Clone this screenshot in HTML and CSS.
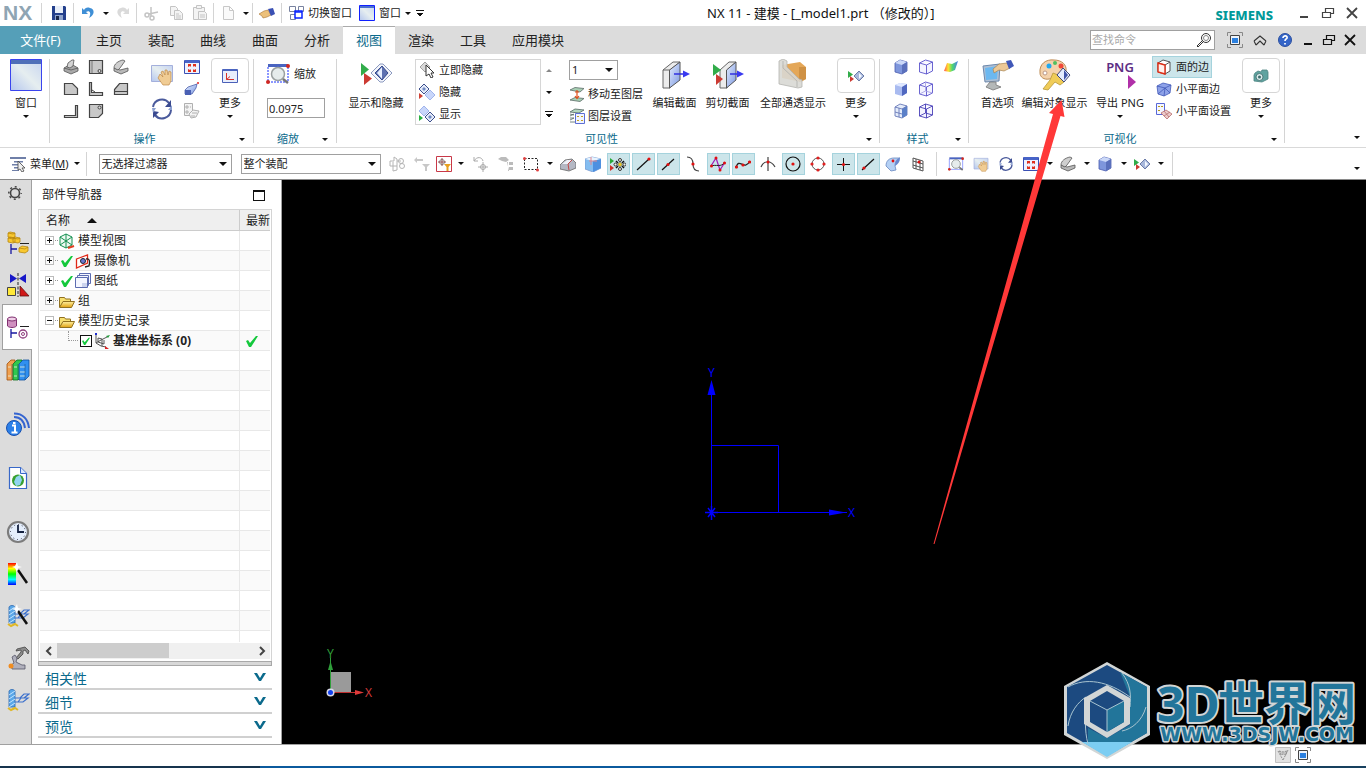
FILE: index.html
```html
<!DOCTYPE html>
<html lang="zh-CN">
<head>
<meta charset="utf-8">
<title>NX 11 - 建模</title>
<link rel="stylesheet" href="styles.css">
</head>
<body>
<svg class="sprite" aria-hidden="true">
  <defs>
    <linearGradient id="gBlue" x1="0" y1="0" x2="1" y2="1"><stop offset="0" stop-color="#e4edff"/><stop offset="1" stop-color="#7c98e0"/></linearGradient>
    <linearGradient id="gWin" x1="0" y1="1" x2="1" y2="0"><stop offset="0" stop-color="#b4c6ee"/><stop offset=".5" stop-color="#e6eef0"/><stop offset="1" stop-color="#c6d4f0"/></linearGradient>
    <linearGradient id="gFold" x1="0" y1="0" x2="0" y2="1"><stop offset="0" stop-color="#fff0a0"/><stop offset="1" stop-color="#e0a010"/></linearGradient>
    <linearGradient id="gRain" x1="0" y1="0" x2="0" y2="1"><stop offset="0" stop-color="#f00"/><stop offset=".25" stop-color="#ff0"/><stop offset=".5" stop-color="#0f0"/><stop offset=".75" stop-color="#0ff"/><stop offset="1" stop-color="#00f"/></linearGradient>
    <linearGradient id="gRainH" x1="0" y1="0" x2="1" y2="0"><stop offset="0" stop-color="#f55"/><stop offset=".3" stop-color="#ffe22e"/><stop offset=".6" stop-color="#4cd870"/><stop offset="1" stop-color="#4a78f0"/></linearGradient>
  </defs>
  <symbol id="save" viewBox="0 0 16 16"><path d="M1 1h13l1 1v13H1z" fill="#24408c"/><path d="M4 1h8v7H4z" fill="#e8eef8"/><path d="M4 10h8v5H4z" fill="#8fa4cc"/><path d="M5 11h3v4H5z" fill="#18264a"/></symbol>
  <symbol id="undo" viewBox="0 0 16 16"><path d="M2 3v6h6L6 7c3-2 6 0 3 6 6-3 6-9 1-10C7 2 5 3 4 5z" fill="#3f8fd6"/></symbol>
  <symbol id="redo" viewBox="0 0 16 16"><path d="M14 3v6H8l2-2C7 5 4 7 7 13 1 10 1 4 6 3c3-1 5 0 6 2z" fill="#dadada"/></symbol>
  <symbol id="cut" viewBox="0 0 16 16"><g fill="none" stroke="#c4c4c4" stroke-width="1.5"><circle cx="4" cy="10" r="2"/><circle cx="9" cy="13" r="2"/><path d="M6 9l9-2M8 11V2"/></g></symbol>
  <symbol id="copy" viewBox="0 0 16 16"><g fill="#f4f4f4" stroke="#c4c4c4"><path d="M2.500 1.500h5l2 2v7h-7z"/><path d="M6.500 5.500h5l3 3v6h-8z"/><path d="M8 9h3M8 11h5M8 13h5"/></g></symbol>
  <symbol id="paste" viewBox="0 0 16 16"><g fill="#f4f4f4" stroke="#c4c4c4"><path d="M1.500 2.500h11v12h-11z"/><path d="M4.500.5h5v3h-5z"/><path d="M6.500 6.500h6l2 2v6h-8zM8 10h5M8 12h5"/></g></symbol>
  <symbol id="page" viewBox="0 0 16 16"><path d="M3.500 1.500h6l4 4v9h-10zM9.500 1.500v4h4" fill="#fafafa" stroke="#c8c8c8"/></symbol>
  <symbol id="hand" viewBox="0 0 16 16"><path d="M0 9l5-3 4-1 3 5-4 2-4 1-1-2z" fill="#ecc07a" stroke="#a87432" stroke-width=".6"/><path d="M9 4l5-1 2 6-4 2z" fill="#3a50b4"/></symbol>
  <symbol id="switchw" viewBox="0 0 16 16"><g fill="#fff" stroke="#7882a0"><path d="M.5 1.500h6v5h-6zM9.500 1.500h5v5h-5zM1.500 9.500h5v5h-5z"/></g><path d="M6 6h7v7H6z" fill="#fff" stroke="#0a24ff" stroke-width="1.500"/><path d="M6 7h7" stroke="#0a24ff" stroke-width="1.500"/></symbol>
  <symbol id="win" viewBox="0 0 16 16"><path d="M.5.5h15v15H.5z" fill="url(#gWin)" stroke="#1020ff"/><path d="M1 1h14v2H1z" fill="#4a6fd0"/></symbol>
  <symbol id="bigwin" viewBox="0 0 32 32"><path d="M.5.5h31v31H.5z" fill="url(#gWin)" stroke="#3a44ee"/><path d="M1 1h30v4H1z" fill="#5070b8"/></symbol>
  <symbol id="solid1" viewBox="0 0 16 16"><path d="M1 9l7-4 7 4v3l-7 3-7-3z" fill="#a8a8a8" stroke="#555" stroke-width=".8"/><path d="M4 8l1-4 4-3h2l-1 6-3 2z" fill="#d4d4d4" stroke="#555" stroke-width=".8"/><path d="M1 9l7 2 7-2" fill="none" stroke="#555" stroke-width=".8"/></symbol>
  <symbol id="solid2" viewBox="0 0 16 16"><path d="M1 9l6 2 8-2v3l-7 3-7-3z" fill="#b8b8b8" stroke="#555" stroke-width=".8"/><path d="M1 9c0-4 4-7 9-8l2 1-5 7-2 2z" fill="#cfcfcf" stroke="#555" stroke-width=".8"/></symbol>
  <symbol id="top" viewBox="0 0 16 16"><path d="M1.500 1.500h13v13h-13z" fill="#c8c8c8" stroke="#444" stroke-width="1.200"/><path d="M4 2v12" stroke="#777"/><circle cx="11.500" cy="12" r="1.500" fill="#ddd" stroke="#444"/></symbol>
  <symbol id="front" viewBox="0 0 16 16"><path d="M1.500 2.500h8l5 5v6h-13z" fill="#c8c8c8" stroke="#444" stroke-width="1.200"/></symbol>
  <symbol id="ell" viewBox="0 0 16 16"><path d="M1.500 1.500h2v10h11v3h-13z" fill="#c8c8c8" stroke="#444" stroke-width="1.200"/><path d="M4 9l3 2" stroke="#444"/></symbol>
  <symbol id="left" viewBox="0 0 16 16"><path d="M6.500 2.500h8v11h-13v-5zM1 10.500h14" fill="#c8c8c8" stroke="#444" stroke-width="1.200"/></symbol>
  <symbol id="rev" viewBox="0 0 16 16"><path d="M12.500 2.500h2v12h-13v-2h11z" fill="#c8c8c8" stroke="#444" stroke-width="1.200"/></symbol>
  <symbol id="bottom" viewBox="0 0 16 16"><path d="M1.500 1.500h13v9l-4 4h-9z" fill="#c8c8c8" stroke="#444" stroke-width="1.200"/><circle cx="11.500" cy="4.500" r="1.500" fill="#ddd" stroke="#444"/></symbol>
  <symbol id="pan" viewBox="0 0 24 24"><path d="M1.500 3.500h21v16h-21z" fill="url(#gWin)" stroke="#a4b0dc"/><path d="M10 12l3 3-2-5 2-1 2 4 0-5 2 0 1 5 1-4 2 1v9l-2 4h-6l-5-7z" fill="#f0cc94" stroke="#c08a48" stroke-width=".7"/></symbol>
  <symbol id="rot" viewBox="0 0 24 24"><g fill="none" stroke="#4a5a9c" stroke-width="2"><path d="M3 10A9 9 0 0 1 19 6"/><path d="M21 13A9 9 0 0 1 5 18"/></g><path d="M21 3v7h-6zM3 21v-7l6 1z" fill="#3a4a90"/><path d="M2 11l4 0-3 5zM22 13h-4l4-5z" fill="#8ca0d0"/></symbol>
  <symbol id="fit" viewBox="0 0 16 16"><path d="M.5 1.500h15v13H.5z" fill="#eef2ff" stroke="#3a50b4"/><path d="M1 1h14v3H1z" fill="#4864c8"/><path d="M4 5h3v3l-1-1-2 1zM12 5H9v3l1-1 2 1zM4 13h3v-3l-1 1-2-1zM12 13H9v-3l1 1 2-1z" fill="#e0301c"/></symbol>
  <symbol id="persp" viewBox="0 0 16 16"><path d="M1 9l3-3 9-3-1 4-4 6H1z" fill="url(#gBlue)" stroke="#3c50a0" stroke-width=".7"/><path d="M1 9h6v5H1z" fill="#4a60b4"/><circle cx="14" cy="2" r="1" fill="#e02020"/></symbol>
  <symbol id="graylist" viewBox="0 0 16 16"><g fill="#f3f3f3" stroke="#b0b0b0"><path d="M.5.5h8v12h-8zM2 3h2v2H2zM2 8h2v2H2zM6 4h1"/><path d="M5 11l4-4 6 1-3 6-5 1z"/><path d="M8 10h5M7 13h4"/></g></symbol>
  <symbol id="csyswin" viewBox="0 0 16 16"><path d="M.5 1.500h15v13H.5z" fill="#e8eefc" stroke="#4a60b8"/><path d="M1 1h14v2H1z" fill="#4a64c0"/><path d="M4.500 5v6.500l3.500-3M4.500 11.500H12" fill="none" stroke="#d83028"/></symbol>
  <symbol id="zoom" viewBox="0 0 24 24"><path d="M2 2h20v3H2z" fill="#4a64c0"/><path d="M2 5v15h20V5" fill="none" stroke="#1830ff" stroke-dasharray="2 1"/><circle cx="12" cy="12" r="6.500" fill="#e6ecec" stroke="#9aa0a0" stroke-width="1.500"/><path d="M17 17l5 4" stroke="#777" stroke-width="2.500"/><circle cx="2" cy="20" r="2" fill="#d02820"/><circle cx="22" cy="4" r="2" fill="#d02820"/></symbol>
  <symbol id="showhide" viewBox="0 0 32 32"><path d="M1 4l8 6.500-8 6.500z" fill="#31ac4a"/><path d="M4 14l8 5.500-8 6.500z" fill="#cc3a32"/><path d="M20 5h3l9 9-9 9h-3l-9-9z" fill="#f2f4fa" stroke="#8c9ac0"/><path d="M22 7l6 7-6 7-7-7z" fill="#5c70b0" stroke="#34488c"/><path d="M22 8v12l-5-6z" fill="#e8f0ff"/></symbol>
  <symbol id="hideNow" viewBox="0 0 16 16"><path d="M6 0l5 5-5 5-5-5z" fill="#d8d8d8" stroke="#a0a0a0"/><path d="M7 3v11l3-2 2 4 2-1-2-4h3z" fill="#fff" stroke="#333"/></symbol>
  <symbol id="hide" viewBox="0 0 16 16"><path d="M5 0l5 5-5 5-5-5z" fill="#e4eaf8" stroke="#3c4e8c"/><path d="M5 3l2 2-2 2-2-2z" fill="#7089c4"/><path d="M11 6l5 5-5 5-5-5z" fill="#c8d6fa" stroke="#a0b4ec"/><path d="M0 9l4 3-4 3z" fill="#d04034"/></symbol>
  <symbol id="show" viewBox="0 0 16 16"><path d="M5 0l5 5-5 5-5-5z" fill="#c8d6fa" stroke="#a0b4ec"/><path d="M11 6l5 5-5 5-5-5z" fill="#e4eaf8" stroke="#3c4e8c"/><path d="M11 9l2 2-2 2-2-2z" fill="#7089c4"/><path d="M0 9l4 3-4 3z" fill="#28b040"/></symbol>
  <symbol id="movelayer" viewBox="0 0 16 16"><g stroke="#5c6c68" stroke-width=".8"><path d="M1 4l5-2.500 9 1L11 6zM1 14l5-2.500 9 1-4 3z" fill="#a8d0b4"/></g><path d="M8 4v8M6 10l2 2.500 2-2.500M6 6h4" stroke="#e0501c" fill="none" stroke-width="1.200"/></symbol>
  <symbol id="layerset" viewBox="0 0 16 16"><path d="M1 4l5-3 9 1-5 3zM1 8l4-2M1 12l4-2M1 6l4 1M1 10h4M1 14h5" fill="#b4d8c0" stroke="#506460" stroke-width=".8"/><path d="M6.500 5.500h9v10h-9z" fill="#f0f4ff" stroke="#5c6ed4"/><path d="M8 8h2v1H8zm0 4h2v1H8zM12 8h2v1h-2zm0 4h2v1h-2z" fill="#c0a020"/></symbol>
  <symbol id="section" viewBox="0 0 32 32"><path d="M4 11L14 3h7l-10 8v18H4z" fill="#ececec" stroke="#666"/><path d="M10.500 11L21 3v18l-10.500 8z" fill="url(#gBlue)" stroke="#555"/><path d="M4 11h7" stroke="#666"/><path d="M15 15h11" stroke="#3030e0" stroke-width="1.500"/><path d="M24 11.500l7 3.500-7 3.500z" fill="#3a3af0"/></symbol>
  <symbol id="clip" viewBox="0 0 32 32"><path d="M8 11l9-8h7l-9 8v18H8z" fill="#ececec" stroke="#666"/><path d="M14.500 11L24 3v18l-9.500 8z" fill="url(#gBlue)" stroke="#555"/><path d="M18 15h9" stroke="#3030e0" stroke-width="1.500"/><path d="M25 11.500l7 3.500-7 3.500z" fill="#3a3af0"/><path d="M1 5l8 6-8 6z" fill="#31ac4a"/><path d="M4 15l7 5-7 6z" fill="#cc3a32"/></symbol>
  <symbol id="through" viewBox="0 0 32 32"><path d="M5 6l18-3 6 5v12l-5 3-19-4z" fill="#e4a758"/><path d="M22 8l7 0v12l-7 3z" fill="#cf9144"/><path d="M2 2l4-2 4 2v6l12 12 3 1v7l-4 1-19-4z" fill="#d8d8d4" fill-opacity=".9" stroke="#b4b4b0" stroke-width=".8"/><path d="M6 2v7l14 13v6" fill="none" stroke="#b8b8b4"/></symbol>
  <symbol id="minish" viewBox="0 0 16 16"><path d="M0 3l5 3.500L0 10z" fill="#31ac4a"/><path d="M2 8l4 3-4 3z" fill="#cc3a32"/><path d="M11 3l5 5-5 5-5-5z" fill="#a8b8dc" stroke="#6c7ca8"/><path d="M11 5l3 3-3 3z" fill="#f4f8ff"/></symbol>
  <symbol id="cube" viewBox="0 0 16 16"><path d="M2 4l5-3 7 2v9l-5 3-7-2z" fill="#7e96dc" stroke="#4a5cae" stroke-width=".8"/><path d="M2 4l7 2 5-3-7-2z" fill="#cbd8f8"/><path d="M9 6v9l5-3V3z" fill="#5a70bc"/></symbol>
  <symbol id="cubes" viewBox="0 0 16 16"><path d="M2 4l5-2 7 1v9l-5 3-7-2z" fill="#a9bbf0"/><path d="M2 4l7 2 5-3-7-1z" fill="#dfe8ff"/><path d="M9 6v9l5-3V3z" fill="#5068c0"/></symbol>
  <symbol id="cubew" viewBox="0 0 16 16"><path d="M1.500 4l6-3 7 2v9l-6 3-7-2zM1.500 4l7 2 6-3M8.500 6v9" fill="#f4f4ff" stroke="#5a54cc" stroke-width=".9"/></symbol>
  <symbol id="cubeh" viewBox="0 0 16 16"><path d="M1.500 4l6-3 7 2v9l-6 3-7-2zM1.500 4l7 2 6-3M8.500 6v9" fill="#f4f4ff" stroke="#5a54cc" stroke-width=".9"/><path d="M7.500 1v9l-6 3M7.500 10l7 2" fill="none" stroke="#a8a4e4" stroke-width=".9"/></symbol>
  <symbol id="cubex" viewBox="0 0 16 16"><path d="M1.500 4l6-3 7 2v9l-6 3-7-2zM1.500 4l7 2 6-3M8.500 6v9M7.500 1v9l-6 3M7.500 10l7 2" fill="#f4f4ff" stroke="#4840b8" stroke-width=".9"/></symbol>
  <symbol id="cubep" viewBox="0 0 16 16"><path d="M2 4l5-3 7 2v9l-5 3-7-2z" fill="#e4ecfa" stroke="#6878b8" stroke-width=".9"/><path d="M9 6v9l5-3V3z" fill="#5a80c8"/><path d="M2 4l7 2 5-3M6 5v9M2 9l7 2" fill="none" stroke="#6878b8" stroke-width=".9"/></symbol>
  <symbol id="rain" viewBox="0 0 16 16"><path d="M4 4l5 1 6-3-3 9-5 2-6-1z" fill="url(#gRainH)"/></symbol>
  <symbol id="pref" viewBox="0 0 32 32"><path d="M1 7l17-2-1 17-14 1z" fill="#b0c0d4" stroke="#6c88ac"/><path d="M3 9l13-2-1 13-11 1z" fill="#6cb8f0"/><path d="M8 23h6v3l5 2-8 3-7-3z" fill="#b4b8b8" stroke="#888"/><path d="M11 10l6-5 8-1 3 5-6 3-5-1-5 3z" fill="#ecc896" stroke="#a88450" stroke-width=".7"/><path d="M24 2l5-1 3 6-5 3z" fill="#4058b8"/></symbol>
  <symbol id="palette" viewBox="0 0 32 32"><path d="M1 14C0 5 7 0 15 1c8 0 13 5 12 11-1 5-5 5-8 4-4-1-5 4-9 4-5 1-9-2-9-6z" fill="#f4d2ac" stroke="#bd8c56"/><circle cx="6" cy="14" r="2" fill="#fff" stroke="#b98"/><circle cx="10" cy="7" r="2.500" fill="#20a8f0"/><circle cx="16" cy="4" r="2" fill="#50c060"/><circle cx="22" cy="7" r="2.500" fill="#f04838"/><path d="M14 14l5 2 6 7-4 3-5-3-7 8-5-1 7-9z" fill="#f0cc58" stroke="#b89838" stroke-width=".8"/><path d="M24 9l7 7-6 7-7-7z" fill="#e4ecff" stroke="#404878"/><path d="M25 11l4 5-4 5z" fill="#4054a8"/></symbol>
  <symbol id="faceedge" viewBox="0 0 16 16"><path d="M2 4l5-3 7 2v9l-5 3-7-2z" fill="#fff" stroke="#555"/><path d="M2 4l7 2 5-3M9 6v9" fill="none" stroke="#555"/><path d="M2 4l7 2v9l-7-2z" fill="#fff0ec" stroke="#e02c14" stroke-width="1.400"/></symbol>
  <symbol id="facet" viewBox="0 0 16 16"><path d="M1 5l6-3 8 2-1 8-6 3-6-2z" fill="#8ea2e8" stroke="#4058b8" stroke-width=".8"/><path d="M1 5l8 2 6-3M9 7l-1 8M2 13l7-6 5 5" fill="none" stroke="#4058b8" stroke-width=".8"/></symbol>
  <symbol id="facetset" viewBox="0 0 16 16"><path d="M.5.5h8v11h-8z" fill="#f4f6ff" stroke="#5868d8"/><path d="M2 3h2v1H2zM2 7h2v1H2zM5 3h2v1H5z" fill="#b49818"/><path d="M5 10l5-3 6 4-5 5z" fill="#eccaca" stroke="#b87070" stroke-width=".8"/><path d="M8 8l5 6M14 9l-6 4" stroke="#b87070" stroke-width=".8"/></symbol>
  <symbol id="camera" viewBox="0 0 16 16"><path d="M2 5l3-2 3 1 1-2 5 0 1 2v7l-6 3-8-1V7z" fill="#5fa3a0" stroke="#4c8482" stroke-width=".8"/><circle cx="6.500" cy="9" r="3.500" fill="#d8eaea" stroke="#3c6868" stroke-width=".8"/><circle cx="6.500" cy="9" r="1.500" fill="#3c6c6c"/></symbol>
  <symbol id="menu" viewBox="0 0 16 16"><path d="M0 1h16v2H0zM4 5h9v1.500H4zM2 8h7v1.500H2zM4 11h5v1.500H4zM2 14h7v1H2z" fill="#6f7fa8"/><path d="M8 5v9l2-1 2 3 2-1-2-3h3z" fill="#eee" stroke="#444" stroke-width=".8"/></symbol>
  <symbol id="g1" viewBox="0 0 16 16"><g fill="none" stroke="#b4b4b4"><path d="M1 5h4V1l3 2v11l-4 1V6M1 5v5h7M8 5h4"/><circle cx="12" cy="5" r="2.500"/><circle cx="13" cy="10" r="2.500"/></g></symbol>
  <symbol id="g2" viewBox="0 0 16 16"><path d="M0 4l3-3v2h6v2H3v2zM8 8h8l-3 3v4h-2v-4z" fill="#c8c8c8"/></symbol>
  <symbol id="redfilter" viewBox="0 0 16 16"><path d="M.5.5h15v15H.5z" fill="#fff" stroke="#c83848"/><circle cx="6" cy="6" r="2.500" fill="none" stroke="#888"/><path d="M6 2v8M2 6h8" stroke="#905050"/><path d="M8 8h7l-2.500 3v4h-2v-4z" fill="#e8a020"/></symbol>
  <symbol id="g3" viewBox="0 0 16 16"><g fill="none" stroke="#aaa"><path d="M1 1v4h4M1 5c3-5 8-4 9 0"/><circle cx="10" cy="11" r="2.500"/><path d="M10 6v10M5 11h10"/></g></symbol>
  <symbol id="g4" viewBox="0 0 16 16"><path d="M0 3l3-2 5 0 3 3-3 2-4-1zM11 6h4v3h-4zM11 11h4v3h-4zM9 6h1v9h1z" fill="#bbb"/></symbol>
  <symbol id="dash" viewBox="0 0 16 16"><path d="M1.500 2.500h13v11h-13z" fill="none" stroke="#222" stroke-dasharray="2 1.500"/><circle cx="1.500" cy="2.500" r="1.500" fill="#e04040"/><circle cx="14.500" cy="14" r="1.500" fill="#e04040"/></symbol>
  <symbol id="block" viewBox="0 0 16 16"><path d="M0 9l5-5 7-1 4 4v5l-7 3-9-2z" fill="#b4b8c4" stroke="#666" stroke-width=".8"/><path d="M2 8l5-4h5l-4 4z" fill="#eef1f8"/><path d="M8 8l1 6M8 8l4-4" stroke="#c04848"/></symbol>
  <symbol id="glass" viewBox="0 0 16 16"><path d="M0 3l7-2 9 2v9l-8 4-8-3z" fill="#84bdf0" stroke="#7a9bd0" stroke-width=".8"/><path d="M0 3l8 2 8-2-9-2z" fill="#e8f4ff"/><path d="M8 5v11l8-4V3z" fill="#4d90e0"/><path d="M6 1v8M4 5h8" fill="none" stroke="#e08890"/></symbol>
  <symbol id="snap" viewBox="0 0 16 16"><path d="M0 2l4 3-4 3z" fill="#28a838"/><path d="M0 9l4 3-4 3z" fill="#d03028"/><g fill="#f2f2e8" stroke="#333"><circle cx="10" cy="4" r="1.500"/><circle cx="10" cy="13" r="1.500"/><circle cx="5.500" cy="8.500" r="1.500"/><circle cx="14.500" cy="8.500" r="1.500"/></g><path d="M6 5l2 2M14 5l-2 2M6 12l2-2M14 12l-2-2" stroke="#111" stroke-width="1.500"/><circle cx="10" cy="8.500" r="2" fill="#f0d020" stroke="#666" stroke-width=".6"/></symbol>
  <symbol id="endpt" viewBox="0 0 16 16"><path d="M2 14L14 3" stroke="#111" stroke-width="1.200"/><circle cx="14" cy="3" r="1.600" fill="#e01010"/></symbol>
  <symbol id="midpt" viewBox="0 0 16 16"><path d="M2 14L14 3" stroke="#111" stroke-width="1.200"/><circle cx="8" cy="8.500" r="1.600" fill="#e01010"/></symbol>
  <symbol id="ctrl" viewBox="0 0 16 16"><path d="M2 1c4 0 6 2 6 7s2 7 6 7" fill="none" stroke="#444" stroke-width="1.200"/><circle cx="8" cy="8" r="1.600" fill="#e01010"/></symbol>
  <symbol id="spline" viewBox="0 0 16 16"><path d="M1 10L6 2l4 12 5-8" fill="none" stroke="#a018b8" stroke-width="1.200"/><path d="M1 10c5-2 10 2 14-4" fill="none" stroke="#222"/><g fill="#e01010"><circle cx="1.500" cy="10" r="1.500"/><circle cx="6" cy="2" r="1.500"/><circle cx="10" cy="14" r="1.500"/><circle cx="14.500" cy="7" r="1.500"/></g></symbol>
  <symbol id="pole" viewBox="0 0 16 16"><path d="M1 12C4 0 9 16 15 5" fill="none" stroke="#222" stroke-width="1.200"/><g fill="#e01010"><circle cx="1.500" cy="11" r="1.600"/><circle cx="8" cy="9" r="1.600"/><circle cx="14.500" cy="6" r="1.600"/></g></symbol>
  <symbol id="inter" viewBox="0 0 16 16"><path d="M1 11C4 4 11 4 15 11M8 1v14" fill="none" stroke="#444" stroke-width="1.200"/><circle cx="8" cy="6" r="1.500" fill="#e01010"/></symbol>
  <symbol id="center" viewBox="0 0 16 16"><circle cx="8" cy="8" r="7" fill="none" stroke="#111" stroke-width="1.200"/><circle cx="8" cy="8" r="1.600" fill="#e01010"/></symbol>
  <symbol id="quad" viewBox="0 0 16 16"><circle cx="8" cy="8" r="6" fill="none" stroke="#555"/><g fill="#e02020"><circle cx="8" cy="2" r="1.600"/><circle cx="8" cy="14" r="1.600"/><circle cx="2" cy="8" r="1.600"/><circle cx="14" cy="8" r="1.600"/></g></symbol>
  <symbol id="exist" viewBox="0 0 16 16"><path d="M8.500 2v13M2 8.500h13" stroke="#111"/><circle cx="8.500" cy="8.500" r="1.600" fill="#e01010"/></symbol>
  <symbol id="oncurve" viewBox="0 0 16 16"><path d="M2 14L14 3" stroke="#111" stroke-width="1.200"/><circle cx="4" cy="12" r="1.600" fill="#e01010"/></symbol>
  <symbol id="onface" viewBox="0 0 16 16"><path d="M1 10c0-5 3-8 8-8h6c-4 1-5 5-5 8l1 4-5 1z" fill="#b4d0f4" stroke="#6888c0" stroke-width=".8"/><path d="M15 2c0 4-2 6-5 8 0-4 1-7 5-8z" fill="#6888d0"/><circle cx="8" cy="5" r="1.400" fill="#e01010"/></symbol>
  <symbol id="mesh" viewBox="0 0 16 16"><path d="M3 2l10 3v10L3 12zM3 5l10 3M3 9l10 3M6 3v10M10 4v10" fill="none" stroke="#444" stroke-width=".9"/><circle cx="9" cy="6" r="1.500" fill="#e01010"/></symbol>
  <symbol id="fulls" viewBox="0 0 16 16"><path d="M.5 4V.5H4M12 .5h3.500V4M15.500 12v3.500H12M4 15.500H.5V12" fill="none" stroke="#888"/><path d="M3.500 3.500h9v9h-9z" fill="#eef4fb" stroke="#444"/><path d="M5 6h6v5H5z" fill="#2b80e0"/></symbol>
  <symbol id="help" viewBox="0 0 16 16"><circle cx="8" cy="8" r="6.500" fill="#3465c8" stroke="#2c50a0"/><path d="M6 6c0-3 5-2.500 4 0-.3 1-2 1.200-2 3M8 11v1.500" fill="none" stroke="#fff" stroke-width="1.700"/></symbol>
  <symbol id="search" viewBox="0 0 16 16"><circle cx="10" cy="6" r="4.500" fill="none" stroke="#333"/><circle cx="10" cy="6" r="2.500" fill="none" stroke="#888"/><path d="M6.500 8.500L1 14l1 1 5.500-5.500" fill="none" stroke="#333"/></symbol>
  <symbol id="min" viewBox="0 0 16 16"><path d="M4 12h8" stroke="currentColor" stroke-width="2"/></symbol>
  <symbol id="restore" viewBox="0 0 16 16"><path d="M2.500 7.500h8v5h-8zM5.500 7V3.500h8v5H11" fill="none" stroke="currentColor" stroke-width="1.200"/></symbol>
  <symbol id="close" viewBox="0 0 16 16"><path d="M3 3l10 10M13 3L3 13" stroke="currentColor" stroke-width="1.800"/></symbol>
  <symbol id="up" viewBox="0 0 16 16"><path d="M2 9l6-5 6 5M4 13l4-4 4 4M2 9l2 4M14 9l-2 4" fill="none" stroke="#333" stroke-width="1.100"/></symbol>
  <symbol id="gear" viewBox="0 0 16 16"><circle cx="8" cy="8" r="4.500" fill="none" stroke="#444" stroke-width="1.600"/><circle cx="8" cy="8" r="6.200" fill="none" stroke="#444" stroke-width="1.500" stroke-dasharray="2 2.870" stroke-dashoffset="1"/></symbol>
  <symbol id="asmnav" viewBox="0 0 24 24"><g fill="#f8c830" stroke="#b88810" stroke-width=".8"><path d="M2 2l2-1 5 1v4l-2 1-5-1zM2 7l2-1 5 1v4l-2 1-5-1zM7 7l2-1 5 1v4l-2 1-5-1zM13 17l3-2 6 1v4l-3 2-6-1z"/><path d="M2 2l5 1 2-1M2 7l5 1 2-1M7 7l5 1 2-1M13 17l6 1 3-2" fill="none"/></g><path d="M5 13v10M5 18h6" stroke="#1818a0" stroke-width="1.300"/><path d="M14 12.500h9" stroke="#222"/></symbol>
  <symbol id="constr" viewBox="0 0 24 24"><path d="M4 1l7 4.500L4 10zM20 1l-7 4.500L20 10z" fill="#1818c8"/><path d="M12 0v24" stroke="#222" stroke-dasharray="3 1.500"/><path d="M1.500 14.500h8v8h-8z" fill="#ffe838" stroke="#444"/><path d="M14 13v10h9z" fill="#d01818" stroke="#611" stroke-width=".8"/></symbol>
  <symbol id="partnav" viewBox="0 0 24 24"><path d="M1.500 4v7c2 2 7 2 9 0V4z" fill="#d090c0" stroke="#803070"/><ellipse cx="6" cy="4" rx="4.500" ry="2" fill="#f0d0e8" stroke="#803070"/><path d="M5 14v9M5 18h6" stroke="#1818a0" stroke-width="1.300"/><path d="M14 11.500h9" stroke="#222"/><circle cx="17" cy="19" r="4" fill="#fff" stroke="#904080" stroke-width="1.300"/><circle cx="17" cy="19" r="1.500" fill="none" stroke="#904080"/></symbol>
  <symbol id="books" viewBox="0 0 24 24"><g stroke-width=".8"><path d="M1 6l4-4h4v16l-3 4H1z" fill="#f0a050" stroke="#a05010"/><path d="M7 6l4-4h5v16l-4 4H7z" fill="#30c850" stroke="#107020"/><path d="M13 6l4-4h6v16l-4 4h-6z" fill="#3090f0" stroke="#1050a0"/><path d="M2 9h3M2 18h3M8 9h3M8 18h3M14 9h5M14 14h5M14 18h5" fill="none" stroke="#e8f4e0"/><path d="M6 6v16M12 6v16M19 6v16" stroke="#135" stroke-opacity=".5"/></g></symbol>
  <symbol id="info" viewBox="0 0 24 24"><circle cx="8" cy="16" r="7.500" fill="#2c80e8" stroke="#1850b0"/><path d="M6 13.500h3V20M5.500 20.500h6M7 11h2.500" fill="none" stroke="#fff" stroke-width="2"/><path d="M8 5c6 0 10 4 11 11M8 1.500c9 0 14 6 15 14.500" fill="none" stroke="#3464d0" stroke-width="2"/></symbol>
  <symbol id="web" viewBox="0 0 24 24"><path d="M3.500 1.500h11l6 6v15h-17z" fill="#fff" stroke="#3868c8" stroke-width="1.200"/><path d="M14.500 1.500v6h6" fill="#dce8ff" stroke="#3868c8"/><circle cx="12" cy="14.500" r="6" fill="#38a030"/><path d="M10 11l4-2 2 5-2 5-4 1-2-4z" fill="#90d4f0"/></symbol>
  <symbol id="clock" viewBox="0 0 24 24"><circle cx="12" cy="12" r="10" fill="#e4eefc" stroke="#7c7c7c" stroke-width="2.200"/><circle cx="12" cy="12" r="7.500" fill="none" stroke="#334" stroke-dasharray="1 2.900"/><path d="M12 5v7h6" fill="none" stroke="#122040" stroke-width="1.800"/></symbol>
  <symbol id="rainwand" viewBox="0 0 24 24"><path d="M2 1h8v22H2z" fill="url(#gRain)"/><path d="M12 8l9 13" stroke="#111" stroke-width="2.500"/><path d="M11 0l1 4 4 1-4 1-1 4-2-4-3-1 3-1z" fill="#fff"/></symbol>
  <symbol id="drill" viewBox="0 0 24 24"><path d="M3 3c1-2 5-2 6 0v16H3z" fill="#5ca8e8" stroke="#2c68b0" stroke-width=".8"/><path d="M3 7l6-4M3 11l6-4M3 15l6-4M3 19l6-4" stroke="#c4e4ff"/><path d="M9 10h5l4-4h5l-5 4h4l-5 4H9M14 10h4M12 14l3-4" fill="none" stroke="#3c70cc" stroke-width="1.200"/><path d="M2 20l3 2 4-2 3 2" fill="none" stroke="#e0b828" stroke-width="2"/></symbol>
  <symbol id="robot" viewBox="0 0 24 24"><path d="M11 3l8-2 4 4-1 3-3-4-2 1 0 3-5 5-2-1 5-6v-2l-5 1z" fill="#8c8c8c" stroke="#444" stroke-width=".8"/><path d="M6 11l3-2 2 3-1 4 6 3 3 0v4H6l-1-4 3-2z" fill="#b0b0bc" stroke="#555568" stroke-width=".8"/><circle cx="5" cy="20" r="2.500" fill="#f08c20"/></symbol>
  <symbol id="mview" viewBox="0 0 16 16"><path d="M1 4l6-3 6 3v8l-6 3-6-3zM7 1v14M1 4l12 8M13 4L1 12" fill="#effaf3" stroke="#149050"/><path d="M9 15l6-2" stroke="#e04020" stroke-width="2"/></symbol>
  <symbol id="cam" viewBox="0 0 16 16"><path d="M1.500 6l11-4v8l-11 5z" fill="#fff" stroke="#e02818" stroke-width="1.300"/><circle cx="8" cy="8" r="2.500" fill="#6878d0" stroke="#223"/><path d="M11 6c4-1 4 3 3 7l-4 1" fill="none" stroke="#222" stroke-width="1.300"/></symbol>
  <symbol id="sheets" viewBox="0 0 16 16"><g fill="#f4f6ff" stroke="#5c6cb0"><path d="M4.500.5h11v10h-11z"/><path d="M2.500 2.500h11v10h-11z"/><path d="M.5 4.500h12v10H.5z"/></g><path d="M7 10h5v4H7z" fill="#ccd4ee"/></symbol>
  <symbol id="folder" viewBox="0 0 16 16"><path d="M.5 14V4.500h5l1 1.500h5v3" fill="#f8e070" stroke="#907020"/><path d="M.5 14.500L4 8.500h11.500l-3 6z" fill="url(#gFold)" stroke="#907020"/></symbol>
  <symbol id="csys" viewBox="0 0 16 16"><path d="M2 1v9l5-3 6-3M2 10l5 3 5 1M4 5l4 1v7M4 5v4l6 2V7" fill="none" stroke="#555"/><path d="M12 3l4-1-2 3z" fill="#209838"/><path d="M11 13l4 3-4 0z" fill="#d82020"/><path d="M1 0h2v2H1z" fill="#2030d0"/></symbol>
  <symbol id="check" viewBox="0 0 12 12"><path d="M0 6l2-1 2 3 6-7h2L5 12H3z" fill="#14c83c"/></symbol>
  <symbol id="flag" viewBox="0 0 16 16"><path d="M.5.5h15v15H.5z" fill="#e2e2e2" stroke="#c0c0c0"/><path d="M3 4l5 9M13 3L8 13M4 4l4 1 4-1-1 4-3-1-2 1z" stroke="#909090" fill="#c4c4c4" stroke-dasharray="2 1"/></symbol>
</svg>

<header class="titlebar">
  <span class="nx">NX</span>
  <div class="quick">
    <button class="q sep first" aria-label="保存"><svg class="i16"><use href="#save"/></svg></button>
    <button class="q sep" aria-label="撤消"><svg class="i16"><use href="#undo"/></svg></button>
    <button class="q slim" aria-label="撤消列表"><i class="caret"></i></button>
    <button class="q" aria-label="重做"><svg class="i16"><use href="#redo"/></svg></button>
    <button class="q sep" aria-label="剪切"><svg class="i16"><use href="#cut"/></svg></button>
    <button class="q" aria-label="复制"><svg class="i16"><use href="#copy"/></svg></button>
    <button class="q" aria-label="粘贴"><svg class="i16"><use href="#paste"/></svg></button>
    <button class="q sep" aria-label="新建"><svg class="i16"><use href="#page"/></svg></button>
    <button class="q slim" aria-label="新建列表"><i class="caret"></i></button>
    <button class="q sep" aria-label="重复命令"><svg class="i16"><use href="#hand"/></svg></button>
    <button class="q text sep"><svg class="i16"><use href="#switchw"/></svg>切换窗口</button>
    <button class="q text"><svg class="i16"><use href="#win"/></svg>窗口<i class="caret"></i></button>
    <button class="q over" aria-label="更多工具"><i class="caret bar"></i></button>
  </div>
  <h1>NX 11 - 建模 - [_model1.prt （修改的）]</h1>
  <span class="siemens">SIEMENS</span>
  <div class="winbtns light">
    <button aria-label="最小化"><svg class="i16"><use href="#min"/></svg></button>
    <button aria-label="还原"><svg class="i16"><use href="#restore"/></svg></button>
    <button aria-label="关闭"><svg class="i16"><use href="#close"/></svg></button>
  </div>
</header>

<nav class="tabs">
  <button class="tab file">文件(F)</button>
  <button class="tab">主页</button><button class="tab">装配</button><button class="tab">曲线</button><button class="tab">曲面</button><button class="tab">分析</button><button class="tab on">视图</button><button class="tab">渲染</button><button class="tab">工具</button><button class="tab">应用模块</button>
  <div class="find"><input type="text" placeholder="查找命令" aria-label="查找命令"><svg class="i16"><use href="#search"/></svg></div>
  <div class="winbtns">
    <button aria-label="全屏"><svg class="i16"><use href="#fulls"/></svg></button>
    <button aria-label="折叠功能区"><svg class="i16"><use href="#up"/></svg></button>
    <button aria-label="帮助"><svg class="i16"><use href="#help"/></svg></button>
    <button class="tight" aria-label="最小化"><svg class="i16"><use href="#min"/></svg></button>
    <button class="tight" aria-label="还原"><svg class="i16"><use href="#restore"/></svg></button>
    <button class="tight" aria-label="关闭"><svg class="i16"><use href="#close"/></svg></button>
  </div>
</nav>

<section class="ribbon">
  <div class="group g-window">
    <div class="tools"><button class="big"><svg class="i32"><use href="#bigwin"/></svg><span>窗口</span><i class="caret"></i></button></div>
  </div>
  <div class="group g-op">
    <div class="tools">
      <div class="grid3">
        <button aria-label="正三轴测图"><svg class="i16"><use href="#solid1"/></svg></button><button aria-label="俯视图"><svg class="i16"><use href="#top"/></svg></button><button aria-label="正等测图"><svg class="i16"><use href="#solid2"/></svg></button>
        <button aria-label="前视图"><svg class="i16"><use href="#front"/></svg></button><button aria-label="右视图"><svg class="i16"><use href="#ell"/></svg></button><button aria-label="左视图"><svg class="i16"><use href="#left"/></svg></button>
        <button aria-label="后视图"><svg class="i16"><use href="#rev"/></svg></button><button aria-label="仰视图"><svg class="i16"><use href="#bottom"/></svg></button>
      </div>
      <div class="stack2"><button aria-label="平移"><svg class="i24"><use href="#pan"/></svg></button><button aria-label="旋转"><svg class="i24"><use href="#rot"/></svg></button></div>
      <div class="stack3"><button aria-label="适合窗口"><svg class="i16"><use href="#fit"/></svg></button><button aria-label="透视"><svg class="i16"><use href="#persp"/></svg></button><button aria-label="视图操作"><svg class="i16"><use href="#graylist"/></svg></button></div>
      <button class="big more"><span class="frame"><svg class="i16"><use href="#csyswin"/></svg></span><span>更多</span><i class="caret"></i></button>
    </div>
    <div class="foot"><span>操作</span><i class="caret"></i></div>
  </div>
  <div class="group g-zoom">
    <div class="tools zoomcol">
      <button class="row"><svg class="i24"><use href="#zoom"/></svg>缩放</button>
      <input type="text" value="0.0975" aria-label="缩放比例">
    </div>
    <div class="foot"><span>缩放</span><i class="caret"></i></div>
  </div>
  <div class="group g-vis">
    <div class="tools">
      <button class="big w78"><svg class="i32"><use href="#showhide"/></svg><span>显示和隐藏</span></button>
      <div class="gallery">
        <button class="row"><svg class="i16"><use href="#hideNow"/></svg>立即隐藏</button>
        <button class="row"><svg class="i16"><use href="#hide"/></svg>隐藏</button>
        <button class="row"><svg class="i16"><use href="#show"/></svg>显示</button>
      </div>
      <div class="stack3 scroll"><button aria-label="上一行"><i class="caret upw"></i></button><button aria-label="下一行"><i class="caret"></i></button><button aria-label="展开"><i class="caret bar"></i></button></div>
      <div class="layers">
        <div class="combo short"><select aria-label="工作图层"><option>1</option></select><i class="caret wide"></i></div>
        <button class="row"><svg class="i16"><use href="#movelayer"/></svg>移动至图层</button>
        <button class="row"><svg class="i16"><use href="#layerset"/></svg>图层设置</button>
      </div>
      <button class="big w52"><svg class="i32"><use href="#section"/></svg><span>编辑截面</span></button>
      <button class="big w52"><svg class="i32"><use href="#clip"/></svg><span>剪切截面</span></button>
      <button class="big w78"><svg class="i32"><use href="#through"/></svg><span>全部通透显示</span></button>
      <button class="big more"><span class="frame"><svg class="i16"><use href="#minish"/></svg></span><span>更多</span><i class="caret"></i></button>
    </div>
    <div class="foot wide"><span>可见性</span><i class="caret"></i></div>
  </div>
  <div class="group g-style">
    <div class="tools">
      <div class="grid3">
        <button aria-label="带边着色"><svg class="i16"><use href="#cube"/></svg></button><button aria-label="带有隐藏边的线框"><svg class="i16"><use href="#cubew"/></svg></button><button aria-label="面分析"><svg class="i16"><use href="#rain"/></svg></button>
        <button aria-label="着色"><svg class="i16"><use href="#cubes"/></svg></button><button aria-label="带有淡化边的线框"><svg class="i16"><use href="#cubeh"/></svg></button><span></span>
        <button aria-label="局部着色"><svg class="i16"><use href="#cubep"/></svg></button><button aria-label="静态线框"><svg class="i16"><use href="#cubex"/></svg></button>
      </div>
    </div>
    <div class="foot wide"><span>样式</span><i class="caret"></i></div>
  </div>
  <div class="group g-render">
    <div class="tools">
      <button class="big w41"><svg class="i32"><use href="#pref"/></svg><span>首选项</span></button>
      <button class="big w73"><svg class="i32"><use href="#palette"/></svg><span>编辑对象显示</span></button>
      <button class="big w58"><span class="png"><b>PNG</b><svg class="play" viewBox="0 0 8 14"><path d="M0 0l8 7-8 7z" fill="#b030a8"/></svg></span><span>导出 PNG</span><i class="caret"></i></button>
      <div class="edges">
        <button class="row on"><svg class="i16"><use href="#faceedge"/></svg>面的边</button>
        <button class="row"><svg class="i16"><use href="#facet"/></svg>小平面边</button>
        <button class="row"><svg class="i16"><use href="#facetset"/></svg>小平面设置</button>
      </div>
      <button class="big more"><span class="frame"><svg class="i16"><use href="#camera"/></svg></span><span>更多</span><i class="caret"></i></button>
    </div>
    <div class="foot wide"><span>可视化</span><i class="caret"></i></div>
  </div>
  <div class="group g-rest"><div class="foot"><i class="caret"></i></div></div>
</section>

<section class="selbar">
  <button class="menu"><svg class="i16"><use href="#menu"/></svg><span>菜单(<u>M</u>)</span><i class="caret"></i></button>
  <i class="rule"></i>
  <div class="combo filter"><select aria-label="类型过滤器"><option>无选择过滤器</option></select><i class="caret wide"></i></div>
  <div class="combo scope"><select aria-label="选择范围"><option>整个装配</option></select><i class="caret wide"></i></div>
  <button class="t" aria-label="选择组件"><svg class="i16"><use href="#g1"/></svg></button>
  <button class="t" aria-label="重置过滤器"><svg class="i16"><use href="#g2"/></svg></button>
  <button class="t nar" aria-label="常规选择过滤器"><svg class="i16"><use href="#redfilter"/></svg></button>
  <button class="d far" aria-label="过滤器列表"><i class="caret"></i></button>
  <button class="t" aria-label="恢复"><svg class="i16"><use href="#g3"/></svg></button>
  <button class="t" aria-label="查找"><svg class="i16"><use href="#g4"/></svg></button>
  <button class="t" aria-label="矩形"><svg class="i16"><use href="#dash"/></svg></button>
  <button class="d" aria-label="选择方式"><i class="caret"></i></button>
  <button class="t" aria-label="实体"><svg class="i16"><use href="#block"/></svg></button>
  <button class="t" aria-label="高亮隐藏边"><svg class="i16"><use href="#glass"/></svg></button>
  <button class="t on" aria-label="启用捕捉点"><svg class="i16"><use href="#snap"/></svg></button>
  <button class="t on" aria-label="端点"><svg class="i16"><use href="#endpt"/></svg></button>
  <button class="t on" aria-label="中点"><svg class="i16"><use href="#midpt"/></svg></button>
  <button class="t" aria-label="控制点"><svg class="i16"><use href="#ctrl"/></svg></button>
  <button class="t on" aria-label="极点"><svg class="i16"><use href="#spline"/></svg></button>
  <button class="t on" aria-label="定义点"><svg class="i16"><use href="#pole"/></svg></button>
  <button class="t" aria-label="交点"><svg class="i16"><use href="#inter"/></svg></button>
  <button class="t on" aria-label="圆弧中心"><svg class="i16"><use href="#center"/></svg></button>
  <button class="t" aria-label="象限点"><svg class="i16"><use href="#quad"/></svg></button>
  <button class="t on" aria-label="现有点"><svg class="i16"><use href="#exist"/></svg></button>
  <button class="t on" aria-label="曲线上的点"><svg class="i16"><use href="#oncurve"/></svg></button>
  <button class="t" aria-label="面上的点"><svg class="i16"><use href="#onface"/></svg></button>
  <button class="t" aria-label="网格点"><svg class="i16"><use href="#mesh"/></svg></button>
  <i class="rule mid"></i>
  <button class="t" aria-label="缩放"><svg class="i16"><use href="#zoom"/></svg></button>
  <button class="t" aria-label="平移"><svg class="i16"><use href="#pan"/></svg></button>
  <button class="t" aria-label="旋转"><svg class="i16"><use href="#rot"/></svg></button>
  <button class="t" aria-label="适合窗口"><svg class="i16"><use href="#fit"/></svg></button>
  <button class="d" aria-label="适合窗口列表"><i class="caret"></i></button>
  <button class="t" aria-label="定向视图"><svg class="i16"><use href="#solid2"/></svg></button>
  <button class="d" aria-label="视图列表"><i class="caret"></i></button>
  <button class="t" aria-label="渲染样式"><svg class="i16"><use href="#cube"/></svg></button>
  <button class="d" aria-label="样式列表"><i class="caret"></i></button>
  <button class="t" aria-label="显示和隐藏"><svg class="i16"><use href="#minish"/></svg></button>
  <button class="d" aria-label="显示列表"><i class="caret"></i></button>
  <i class="rule mid"></i>
  <button class="d end" aria-label="选项"><i class="caret"></i></button>
</section>

<main>
  <nav class="rail">
    <button class="first" aria-label="设置"><svg class="i16"><use href="#gear"/></svg></button>
    <button aria-label="装配导航器"><svg class="i24"><use href="#asmnav"/></svg></button>
    <button aria-label="约束导航器"><svg class="i24"><use href="#constr"/></svg></button>
    <button class="on" aria-label="部件导航器"><svg class="i24"><use href="#partnav"/></svg></button>
    <button aria-label="重用库"><svg class="i24"><use href="#books"/></svg></button>
    <button class="gap" aria-label="HD3D 工具"><svg class="i24"><use href="#info"/></svg></button>
    <button class="gap" aria-label="Web 浏览器"><svg class="i24"><use href="#web"/></svg></button>
    <button class="gap" aria-label="历史记录"><svg class="i24"><use href="#clock"/></svg></button>
    <button aria-label="系统材料"><svg class="i24"><use href="#rainwand"/></svg></button>
    <button aria-label="加工向导"><svg class="i24" viewBox="0 0 24 24"><use href="#drill"/><path d="M12 7l9 13" stroke="#111" stroke-width="2.500"/><path d="M11 0l1 4 4 1-4 1-1 4-2-4-3-1 3-1z" fill="#fff"/></svg></button>
    <button aria-label="机床"><svg class="i24"><use href="#robot"/></svg></button>
    <button aria-label="刀具"><svg class="i24"><use href="#drill"/></svg></button>
  </nav>

  <aside class="panel">
    <div class="phead"><h2>部件导航器</h2><button aria-label="最大化面板"></button></div>
    <div class="treebox">
      <div class="treeview">
        <table>
          <thead><tr><th class="name">名称 <i class="sort"></i></th><th>最新</th></tr></thead>
          <tbody>
            <tr><td><div class="node"><button class="pm plus" aria-label="展开"></button><i class="dots"></i><svg class="i16"><use href="#mview"/></svg>模型视图</div></td><td></td></tr>
            <tr><td><div class="node"><button class="pm plus" aria-label="展开"></button><i class="dots"></i><svg class="tick"><use href="#check"/></svg><svg class="i16"><use href="#cam"/></svg>摄像机</div></td><td></td></tr>
            <tr><td><div class="node"><button class="pm plus" aria-label="展开"></button><i class="dots"></i><svg class="tick"><use href="#check"/></svg><svg class="i16"><use href="#sheets"/></svg>图纸</div></td><td></td></tr>
            <tr><td><div class="node"><button class="pm plus" aria-label="展开"></button><i class="dots"></i><svg class="i16"><use href="#folder"/></svg>组</div></td><td></td></tr>
            <tr><td><div class="node"><button class="pm" aria-label="折叠"></button><i class="dots"></i><svg class="i16"><use href="#folder"/></svg>模型历史记录</div></td><td></td></tr>
            <tr><td><div class="node leaf"><i class="elbow"></i><span class="box"><input type="checkbox" checked id="datum"><svg viewBox="0 0 12 12"><use href="#check"/></svg></span><svg class="i16"><use href="#csys"/></svg><label for="datum">基准坐标系 (0)</label></div></td><td><svg class="tick"><use href="#check"/></svg></td></tr>
          </tbody>
        </table>
        <div class="blank"></div>
      </div>
      <div class="hscroll"><button aria-label="向左"><svg viewBox="0 0 8 10"><path d="M6 1L2 5l4 4" fill="none" stroke="#444" stroke-width="2"/></svg></button><div class="track"><div class="thumb"></div></div><button aria-label="向右"><svg viewBox="0 0 8 10"><path d="M2 1l4 4-4 4" fill="none" stroke="#444" stroke-width="2"/></svg></button></div>
    </div>
    <div class="splitter"></div>
    <button class="fold">相关性<svg viewBox="0 0 12 10"><path d="M0 1h3l3 5 3-5h3L7 9H5z" fill="#0b6a8c"/></svg></button>
    <button class="fold">细节<svg viewBox="0 0 12 10"><path d="M0 1h3l3 5 3-5h3L7 9H5z" fill="#0b6a8c"/></svg></button>
    <button class="fold">预览<svg viewBox="0 0 12 10"><path d="M0 1h3l3 5 3-5h3L7 9H5z" fill="#0b6a8c"/></svg></button>
  </aside>

  <section class="canvas">
    <svg class="datum" viewBox="0 0 160 160" width="160" height="160">
      <g stroke="#00f" fill="none"><path d="M9.500 17v133M9 147.500h136M9.500 80.500h67v67"/><path d="M3 147.500h13M9.500 141v14M6 143l7 9M13 143l-7 9" stroke-width="1.500"/></g>
      <path d="M9.500 15l4 15h-8zM144 147.500l-17 3v-6z" fill="#00f"/>
      <text x="6" y="12">Y</text><text x="146" y="152">X</text>
    </svg>
    <svg class="triad" viewBox="0 -8 60 64" width="60" height="64">
      <path d="M9 22h20v21H9z" fill="#9a9a9a"/>
      <path d="M8.500 8v34" stroke="#2f9e3a"/><path d="M8.500 11l2.500 9H6z" fill="#2f9e3a"/>
      <path d="M12 42.500h26" stroke="#c03030"/><path d="M42 42.500l-9 2.500v-5z" fill="#e03a3a"/>
      <circle cx="8.500" cy="42.500" r="4" fill="#d8d8e8"/><circle cx="8.500" cy="42.500" r="2.500" fill="#1040f0"/>
      <text x="5" y="8" fill="#2f9e3a">Y</text><text x="43" y="47" fill="#d03a3a">X</text>
    </svg>
  </section>
</main>

<footer class="status">
  <svg class="i16"><use href="#flag"/></svg><button aria-label="全屏"><svg class="i16"><use href="#fulls"/></svg></button>
</footer>
<div class="taskline"></div>

<svg class="pointer" viewBox="0 0 140 452" width="140" height="452" aria-hidden="true"><path d="M3.500 450L123 20l-4-1L131.500 6l3 17-4-1L4.500 450z" fill="#ff3838"/></svg>

<svg class="mark" viewBox="0 0 300 100" width="300" height="100" aria-label="3D世界网">
  <path d="M43 2l43 24v49L43 99 0 75V26z" fill="#d2d6d6"/>
  <path d="M43 5l40 22v46L43 96 3 73V27z" fill="#1c4a80"/>
  <path d="M56 12l27 15v46L43 96 24 84V68l19 10 23-13V37z" fill="#22759a"/>
  <path d="M18 82h50L43 97z" fill="#7ccdf2"/>
  <path d="M4 27c18-10 40-6 62 10M58 13c9 12 9 22 8 34M82 47c-4 14-14 22-24 24M24 84c-4-14-2-30-3-36M4 66c2-14 10-24 18-29" fill="none" stroke="#a8c4d0"/>
  <path d="M43 25l23 13v26L43 78 20 64V38z" fill="#d2d6d6"/>
  <path d="M43 31l17 10v21L43 72 26 62V41z" fill="#1c4a80"/><path d="M43 50l17-9v21L43 72z" fill="#22759a"/><path d="M26 41l17 9 17-9M43 50v22" fill="none" stroke="#a8c4d0"/>
  <text class="m1" x="93" y="62">3D</text><text class="m2" x="154" y="60">世界网</text>
  <text class="m3" x="96" y="81">WWW.3DSJW.COM</text>
</svg>
</body>
</html>
```
FILE: styles.css
```css
* { box-sizing: border-box; }
body {
  margin: 0; height: 100vh; display: flex; flex-direction: column; overflow: hidden; position: relative;
  font: 11px/16px "Noto Sans", "Noto Sans CJK SC", sans-serif; color: #222; background: #fff;
}
button { margin: 0; padding: 0; border: 0; background: none; font: inherit; color: inherit; display: flex; align-items: center; justify-content: center; white-space: nowrap; flex: none; }
input, select { font: inherit; color: inherit; margin: 0; }
h1, h2 { margin: 0; font-weight: 400; }
svg { display: block; flex: none; }
.sprite { position: absolute; width: 0; height: 0; }
.i16 { width: 16px; height: 16px; }
.i24 { width: 24px; height: 24px; }
.i32 { width: 32px; height: 32px; }
.caret { border: 3px solid transparent; border-top-color: #111; border-bottom: 0; width: 0; height: 3px; flex: none; }
.caret.wide { border-width: 4px 4px 0; height: 4px; }
.caret.bar { width: 8px; height: 6px; border: 0; background: linear-gradient(#111, #111) top / 100% 1px no-repeat, linear-gradient(#111, #111) 1px 3px / 6px 1px no-repeat, linear-gradient(#111, #111) 2px 4px / 4px 1px no-repeat, linear-gradient(#111, #111) 3px 5px / 2px 1px no-repeat; }
.caret.upw { border: 3px solid transparent; border-bottom-color: #888; border-top: 0; }

.titlebar { display: flex; align-items: center; height: 26px; flex: none; }
.nx { width: 40px; padding-left: 3px; font: 700 21px/26px "Liberation Sans", sans-serif; color: #8fa5b3; }
.quick { display: flex; align-items: center; }
.q { height: 20px; width: 24px; }
.q.sep { border-left: 1px solid #d4d4d4; width: 28px; margin-left: 1px; }
.q.sep.first { width: 31px; padding-left: 4px; }
.q.slim { width: 10px; }
.q.text { width: auto; gap: 4px; padding: 0 0 0 7px; }
.q.text.sep { width: auto; gap: 3px; }
.q.over { width: 18px; }
.titlebar h1 { flex: 1; padding-left: 278px; font-size: 13px; white-space: nowrap; color: #111; }
.siemens { font: 800 13px/16px "Noto Sans", sans-serif; color: #009999; padding: 3px 19px 0 0; }
.winbtns { display: flex; align-items: center; padding-right: 6px; color: #111; }
.winbtns button { width: 25px; }
.winbtns.light { color: #444; padding-right: 2px; }
.winbtns.light button { width: 24px; }
.winbtns .tight { width: 21px; }

.tabs { display: flex; height: 28px; flex: none; background: #dcdcdc; font-size: 13px; }
.tab { width: 52px; }
.tab:last-of-type { width: 78px; }
.tab.file { width: 81px; margin-right: 2px; background: #559fb8; color: #fff; }
.tab.on { background: #fff; color: #0b6a8c; box-shadow: inset 0 1px #aaa; }
.find { display: flex; align-items: center; margin: 4px 7px 4px auto; width: 125px; border: 1px solid #a0a0a0; background: #fff; padding-right: 2px; font-size: 11px; }
.find input { border: 0; outline: 0; width: 100%; min-width: 0; padding: 0 0 0 1px; background: none; }
.find input::placeholder { color: #aaa; }

.ribbon { display: flex; height: 94px; flex: none; border-bottom: 1px solid #d9d9d9; padding-top: 2px; }
.group { display: flex; flex-direction: column; margin: 3px 0 4px; border-right: 1px solid #d4d4d4; }
.tools { display: flex; height: 68px; flex: none; margin-top: -3px; }
.foot { flex: 1; display: flex; align-items: center; color: #0b6a8c; padding: 7px 8px 0 0; }
.foot span { flex: 1; text-align: center; }
.foot.wide { padding-right: 7px; }
.g-window { width: 50px; }
.g-op { width: 204px; }
.g-zoom { width: 83px; }
.g-vis { width: 543px; }
.g-style { width: 89px; }
.g-render { width: 316px; }
.g-rest { flex: 1; border: 0; padding-top: 65px; }
.g-rest .foot { justify-content: flex-end; padding: 7px 6px 0 0; }
.g-window .tools { padding-left: 10px; }
.g-op .tools { padding-left: 8px; }
.g-style .tools, .g-render .tools { padding-left: 8px; }
.big { flex-direction: column; justify-content: flex-start; padding-top: 3px; height: 68px; }
.big > span:not(.frame):not(.png) { margin-top: 4px; }
.big .caret { margin-top: 4px; }
.w78 { width: 78px; } .w52 { width: 53px; } .w41 { width: 41px; } .w73 { width: 73px; } .w58 { width: 58px; }
.big.more { width: 38px; padding-top: 2px; margin-left: auto; margin-right: 4px; }
.frame { width: 38px; height: 35px; border: 1px solid #d6d6d6; border-radius: 4px; display: flex; align-items: center; justify-content: center; }
.big.more > span:not(.frame) { margin-top: 2px; }
.grid3 { display: grid; grid-template-columns: repeat(3, 25px); grid-auto-rows: 22px; height: 66px; }
.stack2 { display: flex; flex-direction: column; justify-content: space-between; padding: 6px 0 3px; margin-left: 17px; }
.stack3 { display: grid; grid-template-rows: repeat(3, 22px); width: 16px; margin-left: 10px; }
.scroll { margin-left: 0; margin-top: 3px; }
.row { display: flex; justify-content: flex-start; gap: 4px; height: 22px; }
.zoomcol { flex-direction: column; padding: 6px 0 0 12px; }
.zoomcol .row { height: 24px; }
.zoomcol input { width: 58px; height: 20px; margin: 12px 0 0 1px; border: 1px solid #a0a0a0; padding: 0 1px; }
.gallery { width: 126px; height: 66px; margin-top: 3px; border: 1px solid #d6d6d6; padding-left: 3px; flex: none; display: grid; align-content: center; }
.layers { width: 79px; margin: 3px 0 0 12px; }
.combo { display: grid; align-items: center; height: 20px; }
.combo > * { grid-area: 1 / 1; }
.combo select { appearance: none; width: 100%; height: 20px; border: 1px solid #a0a0a0; border-radius: 0; background: #fff; padding: 0 2px; outline: 0; }
.combo .caret { justify-self: end; margin-right: 5px; pointer-events: none; }
.combo.short { width: 49px; margin-bottom: 3px; margin-top: 1px; }
.layers .row { gap: 3px; }
.png { width: 32px; height: 32px; display: flex; flex-direction: column; align-items: center; }
.png b { font: 600 13px/16px "Noto Sans", sans-serif; color: #5d2e84; }
.play { width: 8px; height: 14px; align-self: flex-end; }
.edges { margin-left: 3px; }
.edges .row { padding: 0 4px; height: 22px; }
.edges .row.on { background: #cce5ea; border: 1px solid #a5d3dd; padding: 0 3px; width: 60px; }

.selbar { display: flex; align-items: center; height: 32px; flex: none; border-bottom: 1px solid #8a8a8a; }
.menu { gap: 4px; padding: 0 6px 0 10px; }
.menu .caret { margin-left: 1px; }
.rule { width: 1px; height: 24px; background: #d4d4d4; flex: none; }
.rule.mid { margin: 0 7px 0 5px; }
.filter { width: 133px; margin: 0 9px 0 12px; }
.scope { width: 140px; margin-right: 4px; }
.t { width: 23px; height: 22px; margin: 0 1px; }
.t.on { background: #cce5ea; border: 1px solid #a5d3dd; }
.t.nar { width: 16px; }
.d { width: 12px; height: 22px; }
.d.far { width: 16px; }
.d.end { margin: 10px 3px 0 auto; }

main { flex: 1; min-height: 0; display: flex; }
.rail { width: 32px; background: #dcdcdc; border-right: 1px solid #a0a0a0; display: flex; flex-direction: column; flex: none; }
.rail button { height: 42px; padding-left: 4px; }
.rail .first { height: 26px; margin-bottom: 16px; padding: 0 1px 0 0; }
.rail .on { background: #fff; height: 46px; margin: -2px -1px -1px 2px; padding: 0; border: 1px solid #a0a0a0; border-right: 0; }
.rail .gap { margin: 12px 0 0; }
.panel { width: 250px; flex: none; display: flex; flex-direction: column; padding: 0 9px 0 6px; border-right: 1px solid #a0a0a0; }
.phead { display: flex; justify-content: space-between; align-items: center; height: 29px; padding: 0 7px 0 4px; }
.phead h2 { font-size: 12px; }
.phead button { width: 12px; height: 11px; border: 1px solid #111; border-top-width: 2px; margin-top: 2px; }
.treebox { flex: 1; min-height: 0; border: 1px solid #d4d4d4; border-bottom: 0; padding: 0 1px 2px; display: flex; flex-direction: column; font-size: 12px; }
.treeview { flex: 1; min-height: 0; overflow: hidden; display: flex; flex-direction: column; }
table { border-collapse: separate; border-spacing: 0; table-layout: fixed; width: 100%; }
th { height: 21px; padding: 2px 0 0 6px; background: #efefef; border-bottom: 1px solid #ccc; font-weight: 400; text-align: left; white-space: nowrap; overflow: hidden; }
th.name { width: 200px; border-right: 1px solid #ccc; }
.sort { display: inline-block; border: 5px solid transparent; border-bottom-color: #111; border-top: 0; vertical-align: 2px; margin-left: 14px; }
td { height: 20px; padding: 0 0 0 6px; border-bottom: 1px solid #e8e8e8; }
td:first-child { border-right: 1px solid #e8e8e8; padding-left: 5px; }
tbody tr:nth-child(even) { background: #fafafa; }
.node { display: flex; align-items: center; gap: 2px; height: 19px; white-space: nowrap; }
.pm { width: 9px; height: 9px; border: 1px solid #bbb; background: linear-gradient(#111, #111) center / 5px 1px no-repeat; }
.pm.plus { background: linear-gradient(#111, #111) center / 5px 1px no-repeat, linear-gradient(#111, #111) center / 1px 5px no-repeat; }
.dots { width: 3px; border-top: 1px dotted #999; margin: 0 -1px; }
.node .i16 { margin-right: 1px; }
.tick { width: 12px; height: 12px; margin-left: 2px; }
td > .tick { margin-left: 0; }
.leaf { padding-left: 23px; font-weight: 700; }
.elbow { width: 10px; height: 10px; border: dotted #999; border-width: 0 0 1px 1px; margin-bottom: 9px; }
.box { display: grid; width: 12px; height: 12px; flex: none; }
.box > * { grid-area: 1 / 1; }
.box input { appearance: none; width: 12px; height: 12px; border: 1px solid #111; background: #fff; }
.box svg { width: 8px; height: 8px; place-self: center; pointer-events: none; }
.blank { flex: 1; background: linear-gradient(#e8e8e8, #e8e8e8) 199px 0 / 1px 100% no-repeat, repeating-linear-gradient(#fff 0 19px, #e8e8e8 19px 20px, #fafafa 20px 39px, #e8e8e8 39px 40px); }
.hscroll { display: flex; height: 16px; background: #f0f0f0; margin-top: 1px; flex: none; }
.hscroll button { width: 17px; }
.hscroll svg { width: 8px; height: 10px; }
.track { flex: 1; }
.thumb { width: 57%; height: 15px; background: #cdcdcd; }
.splitter { height: 5px; border: 1px solid #a8a8a8; background: #d8d8d8; flex: none; }
.fold { height: 24px; justify-content: space-between; font-size: 14px; color: #0b6a8c; border-bottom: 2px solid #d0d0d0; padding: 3px 6px 0 7px; }
.fold svg { width: 12px; height: 10px; margin-bottom: 4px; }
.fold:last-child { margin-bottom: 6px; }
.canvas { flex: 1; background: #000; position: relative; }
.datum { position: absolute; left: 420px; top: 185px; }
.datum text, .triad text { font: 12px "Noto Sans", sans-serif; }
.datum text { fill: #00f; }
.triad { position: absolute; left: 40px; bottom: 38px; }
.status { height: 22px; flex: none; border-top: 1px solid #a0a0a0; display: flex; align-items: center; justify-content: flex-end; gap: 4px; padding: 0 55px 1px 0; }
.taskline { height: 2px; flex: none; background: linear-gradient(90deg, #17344e 19%, #0b5a9d 19% 60%, #17405e 60%); }
.pointer { position: absolute; left: 930px; top: 94px; pointer-events: none; }
.mark { position: absolute; right: 2px; bottom: 8px; pointer-events: none; }
.mark text { fill: #22759a; stroke: #d2d6d6; paint-order: stroke; stroke-linejoin: round; }
.m1 { font: 700 48px "Noto Sans", sans-serif; stroke-width: 4px; }
.m2 { font: 700 46px "Noto Sans CJK SC", sans-serif; stroke-width: 4px; }
.m3 { font: 700 19px "DejaVu Sans", sans-serif; stroke-width: 3px; }
```
